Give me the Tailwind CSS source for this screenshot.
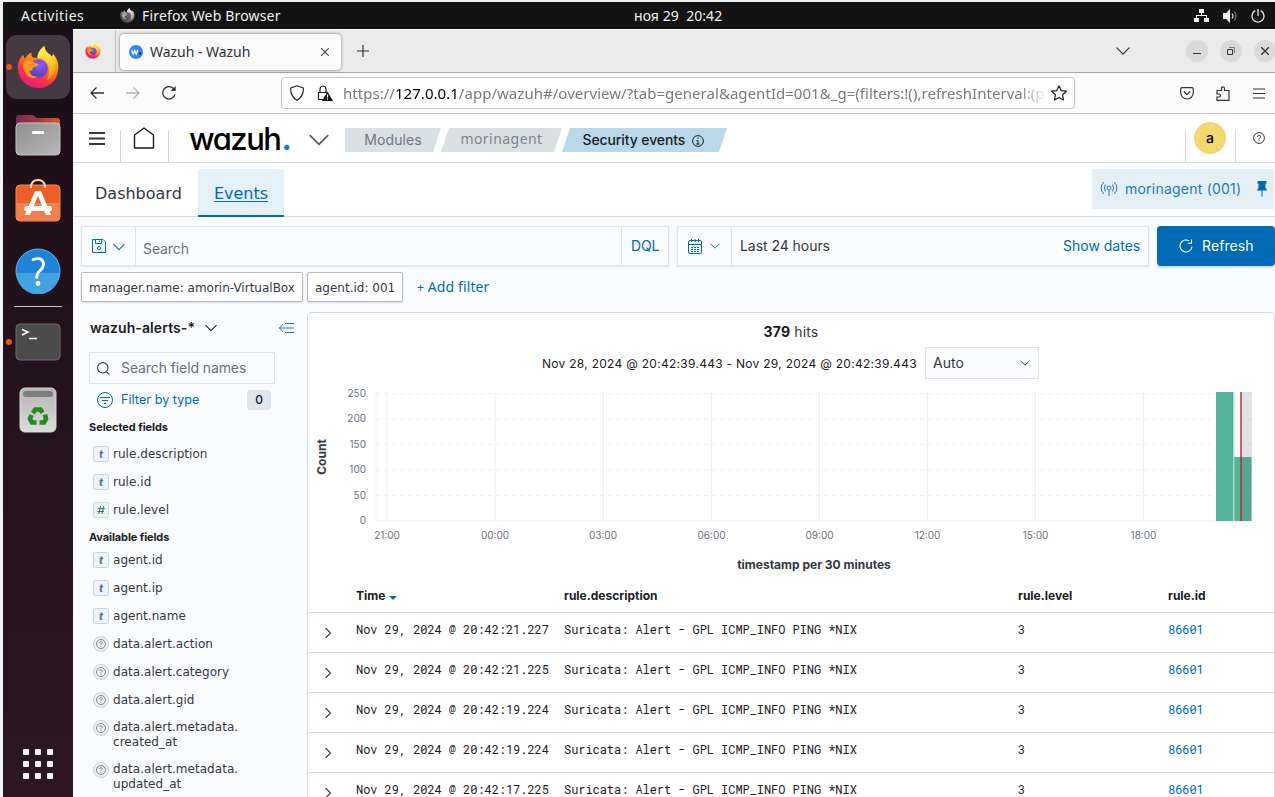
<!DOCTYPE html>
<html lang="en">
<head>
<meta charset="utf-8">
<title>Wazuh - Wazuh</title>
<script src="https://cdn.jsdelivr.net/npm/@tailwindcss/browser@4"></script>
</head>
<body class="w-[1275px] h-[797px] overflow-hidden bg-[#f1f3f5] pl-[3px] pt-[2px] font-['Inter',sans-serif] text-[#343741] whitespace-nowrap">

<svg class="absolute w-0 h-0">
  <defs>
    <linearGradient id="fxBody" x1="0.8" y1="0" x2="0.3" y2="1"><stop offset="0" stop-color="#fff44f"/><stop offset="0.35" stop-color="#ff980e"/><stop offset="0.7" stop-color="#ff3647"/><stop offset="1" stop-color="#e31587"/></linearGradient>
    <radialGradient id="fxGlobe" cx="0.6" cy="0.3" r="0.8"><stop offset="0" stop-color="#9059ff"/><stop offset="1" stop-color="#4a3fb5"/></radialGradient>
    <linearGradient id="fxTail" x1="0.3" y1="0" x2="0.7" y2="1"><stop offset="0" stop-color="#fff44f"/><stop offset="0.5" stop-color="#ffd03a"/><stop offset="1" stop-color="#ff8a16"/></linearGradient>
    <linearGradient id="fileFront" x1="0" y1="0" x2="1" y2="1"><stop offset="0" stop-color="#8f8f8f"/><stop offset="1" stop-color="#b8b8b8"/></linearGradient>
    <linearGradient id="fileBack" x1="0" y1="0" x2="1" y2="0"><stop offset="0" stop-color="#77294f"/><stop offset="0.5" stop-color="#a03a43"/><stop offset="1" stop-color="#e95420"/></linearGradient>
    <linearGradient id="bin" x1="0" y1="0" x2="0" y2="1"><stop offset="0" stop-color="#b5b5b5"/><stop offset="1" stop-color="#dcdcdc"/></linearGradient>
    <symbol id="firefox" viewBox="0 0 44 44">
      <path fill="url(#fxBody)" d="M5 10 C7 8 7 11 8 13 C9 12 12 7 15 7 C14 9 15 11 17 12 L21 12 C21 7 24 3 28 0 C28 4 31 7 34 9 C34 10 36 12 37 8 C42 14 43 20 42 25 C41 36 32 43 22 43 C11 43 2 35 1 24 C0 18 3 13 5 10Z"/>
      <path fill="url(#fxTail)" d="M21 12 C21 7 24 3 28 0 C28 4 31 7 34 9 C40 14 41 20 38 28 C36 32 33 34 30 35 C34 30 34 21 30 17 C28 14 25 12 21 12Z"/>
      <circle cx="22" cy="23" r="9.500" fill="url(#fxGlobe)"/>
      <path fill="#ff9a1f" d="M6 18 C9 14 15 14 17 16 C19 18 22 18 22 19 C22 21 17 21 16 23 C16 25 14 26 12 25 C14 30 17 32 21 31 C16 36 6 31 6 18Z"/>
      <path fill="#8a4bff" d="M18 15 C22 13 28 14 31 20 C27 16 23 17 22 19 C21 17 19 17 18 15Z"/>
    </symbol>
    <symbol id="chev" viewBox="0 0 16 16"><path d="M1 4.500 8 11.500 15 4.500" fill="none" stroke="currentColor" stroke-width="1.400" stroke-linecap="round" stroke-linejoin="round"/></symbol>
    <symbol id="expand" viewBox="0 0 16 16"><path d="M6 3.500 10.500 8 6 12.500" fill="none" stroke="currentColor" stroke-width="1.100" stroke-linecap="round"/></symbol>
    <symbol id="unk" viewBox="0 0 16 16"><circle cx="8" cy="8" r="7.500" fill="#eeeff1" stroke="#cdcfd3"/><circle cx="8" cy="8" r="4.500" fill="none" stroke="#81858f" stroke-width="1"/><path d="M6.600 7 C6.600 5.200 9.500 5.300 9.400 7 C9.300 7.900 8 7.800 8 9.100 M8 9.800 V10.700" fill="none" stroke="#81858f" stroke-width="1"/></symbol>
    <symbol id="tt" viewBox="0 0 16 16"><rect x=".5" y=".5" width="15" height="15" rx="2" fill="#edf3f8" stroke="#c4d6e6"/><text x="8" y="12" text-anchor="middle" font-family="Inter" font-size="11" font-weight="700" font-style="italic" fill="#4a7194">t</text></symbol>
    <symbol id="num" viewBox="0 0 16 16"><rect x=".5" y=".5" width="15" height="15" rx="2" fill="#eaf6f2" stroke="#bfe0d5"/><path d="M7.600 4 5.800 12 M10.800 4 9 12 M5 6.600 H11.800 M4.300 9.500 H11" stroke="#387765" stroke-width="1" fill="none"/></symbol>
  </defs>
</svg>

<!-- desktop panel -->
<div class="h-[27px] bg-[#131313] text-[#f0f0f0] flex items-center font-['Noto_Sans'] leading-[21px]">
  <span class="ml-[18px] w-[99px] text-[14px] tracking-[0.5px]">Activities</span>
  <svg class="w-[15px] h-[15px] grayscale" viewBox="0 0 44 44"><use href="#firefox"/></svg>
  <span class="ml-[7px] w-[492px] text-[14px] tracking-[0.17px]">Firefox Web Browser</span>
  <span class="w-[560px] text-[14px] tracking-[0.05px]">ноя 29&nbsp; 20:42</span>
  <svg class="w-[15px] h-[14px]" viewBox="0 0 15 14" fill="#f0f0f0"><path d="M5 0h5v4H8v2h5v3h2v4h-5V9h2V7H3v2h2v4H0V9h2V6h5V4H5z"/></svg>
  <svg class="ml-[14px] w-[15px] h-[14px]" viewBox="0 0 15 14" fill="none"><path fill="#f0f0f0" d="M0 4h3l4-4v14l-4-4H0z"/><path stroke="#d8d8d8" stroke-width="1.200" d="M9 4.500q2 2.500 0 5"/><path stroke="#777" stroke-width="1.200" d="M11.500 2.500q3 4.500 0 9"/></svg>
  <svg class="ml-[13px] w-[14px] h-[14px]" viewBox="0 0 14 14" fill="none" stroke="#e8e8e8" stroke-width="1.300"><path d="M4.300 1.700a6 6 0 1 0 5.400 0M7 0v7"/></svg>
</div>

<div class="flex h-[768px]">
  <!-- dock -->
  <aside class="w-[70px] shrink-0 bg-linear-to-b from-[#1b0e17] to-[#2c1722] flex flex-col items-center relative">
    <div class="mt-[6px] w-[64px] h-[64px] rounded-[11px] bg-[#453a41] flex items-center justify-center">
      <svg class="w-[43px] h-[43px]" viewBox="0 0 44 44"><use href="#firefox"/></svg>
    </div>
    <div class="absolute left-[3px] top-[35px] size-[6px] rounded-full bg-[#e95420]"></div>
    <div class="absolute left-[3px] top-[310px] size-[6px] rounded-full bg-[#e95420]"></div>
    <svg class="mt-[15px] w-[46px] h-[44px]" viewBox="0 0 46 44"><path fill="url(#fileBack)" d="M1 4q0-3 3-3h13q2 0 3 1.500 1 1.500 3 1.500h19q3 0 3 3v20H1z"/><rect x="1" y="9" width="44" height="32" rx="4" fill="url(#fileFront)" stroke="#c4c4c4"/><rect x="17" y="17" width="12" height="3" rx="1" fill="#fff"/></svg>
    <svg class="mt-[20px] w-[46px] h-[46px]" viewBox="0 0 46 46"><rect x="1" y="7" width="44" height="36" rx="4" fill="#ee5f28" stroke="#f58a5c"/><path fill="#f2804f" d="M1.500 25h43v14q0 4-4 4h-35q-4 0-4-4z"/><path d="M16 10V8q1-6 7-6t7 6v2" fill="none" stroke="#f6dfb0" stroke-width="2"/><path fill="#fff" d="M20 13h6l10 24h-5L23 18l-8 19h-5z"/><rect x="9" y="28" width="28" height="5" rx="2.500" fill="#fff"/></svg>
    <svg class="mt-[24px] w-[46px] h-[46px]" viewBox="0 0 46 46"><circle cx="23" cy="23" r="22" fill="#1f84d6" stroke="#68b4ea"/><path fill="#42a2e2" d="M1.500 25h43a21.500 21.500 0 0 1-43 0z"/><path d="M18 11.500q10-3 10.500 4.500 0 4-3.500 6.500-3.500 3-3.300 7" fill="none" stroke="#fff" stroke-width="2.800" stroke-linecap="round"/><circle cx="23" cy="35.500" r="2.400" fill="#fff"/></svg>
    <div class="mt-[12px] w-[48px] h-px bg-[#c9c6c8]"></div>
    <svg class="mt-[16px] w-[46px] h-[39px]" viewBox="0 0 46 39"><rect x="1" y="1" width="44" height="36" rx="4" fill="#4b4b4b" stroke="#6c6c6c"/><path d="M7 6.500 13 9 7 12M14 15.500h8" fill="none" stroke="#fff" stroke-width="1.500"/></svg>
    <svg class="mt-[25px] w-[38px] h-[46px]" viewBox="0 0 38 46"><rect x="1" y="1" width="36" height="44" rx="5" fill="url(#bin)" stroke="#d6d6d6"/><rect x="4" y="4" width="30" height="6" rx="3" fill="#7c7c7c"/><g fill="none" stroke="#26891d" stroke-width="4.600"><path d="M13.800 26 16.500 22.500H21.500L23.500 25.800"/><path d="M26 27.500 27 32 25 35.500H20.500"/><path d="M17.500 35.500H13L11 32 12.500 28"/></g></svg>
    <div class="mt-auto mb-[18px] grid grid-cols-3 gap-[6px]">
      <i class="size-[6px] rounded-[1px] bg-[#f2f0f1]"></i><i class="size-[6px] rounded-[1px] bg-[#f2f0f1]"></i><i class="size-[6px] rounded-[1px] bg-[#f2f0f1]"></i>
      <i class="size-[6px] rounded-[1px] bg-[#f2f0f1]"></i><i class="size-[6px] rounded-[1px] bg-[#f2f0f1]"></i><i class="size-[6px] rounded-[1px] bg-[#f2f0f1]"></i>
      <i class="size-[6px] rounded-[1px] bg-[#f2f0f1]"></i><i class="size-[6px] rounded-[1px] bg-[#f2f0f1]"></i><i class="size-[6px] rounded-[1px] bg-[#f2f0f1]"></i>
    </div>
  </aside>

  <main class="w-[1202px] shrink-0 bg-[#fafbfd] flex flex-col">
    <!-- browser tabs -->
    <div class="h-[44px] shrink-0 bg-[#ebebeb] border-b border-[#a8a8a8] border-t border-t-white flex items-center text-[#333] font-['Noto_Sans'] [&>*]:shrink-0">
      <div class="w-[43px] h-full border-r border-[#bdbdbd] flex items-center"><svg class="ml-[12px] size-[16px]" viewBox="0 0 44 44"><use href="#firefox"/></svg></div>
      <div class="ml-[4px] w-[221px] h-[36px] mt-[1px] rounded-[4px] bg-[#fbfbfb] shadow-[0_0_3px_rgba(0,0,0,.55)] flex items-center">
        <svg class="ml-[9px] size-[14px]" viewBox="0 0 14 14"><circle cx="7" cy="7" r="7" fill="#3585f9"/><path d="M2.500 5 4.200 9 5.700 5.500 7.200 9 8.800 5" fill="none" stroke="#fff" stroke-width="1.400"/><circle cx="11" cy="8.500" r="1" fill="#111"/></svg>
        <span class="ml-[7px] w-[171px] text-[14px] tracking-[-0.03px]">Wazuh - Wazuh</span>
        <svg class="size-[8px]" viewBox="0 0 8 8"><path d="M0 0 8 8M8 0 0 8" stroke="#444" stroke-width="1.100"/></svg>
      </div>
      <svg class="ml-[16px] size-[12px]" viewBox="0 0 12 12"><path d="M6 0V12M0 6H12" stroke="#333" stroke-width="1.200"/></svg>
      <svg class="ml-[747px] size-[14px] text-[#333]"><use href="#chev"/></svg>
      <div class="ml-[56px] size-[22px] rounded-full bg-[#dadada] flex items-center justify-center"><i class="mt-[5px] w-[8px] h-px bg-[#333]"></i></div>
      <div class="ml-[12px] size-[22px] rounded-full bg-[#dadada] flex items-center justify-center"><svg class="size-[8px]" viewBox="0 0 8 8" fill="none" stroke="#333"><path d="M.5 2.500h5v5h-5z"/><path d="M2 .5h5.500V6" stroke="#777"/></svg></div>
      <div class="ml-[12px] size-[22px] rounded-full bg-[#dadada] flex items-center justify-center"><svg class="size-[8px]" viewBox="0 0 8 8"><path d="M0 0 8 8M8 0 0 8" stroke="#333" stroke-width="1.300"/></svg></div>
    </div>
    <!-- address bar -->
    <div class="h-[41px] shrink-0 bg-[#fbfbfb] border-b border-[#c6c6c6] flex items-center">
      <svg class="ml-[17px] w-[14px] h-[12px]" viewBox="0 0 14 12" fill="none" stroke="#333" stroke-width="1.300"><path d="M14 6H1M6.500.5 1 6l5.500 5.500"/></svg>
      <svg class="ml-[22px] w-[14px] h-[12px]" viewBox="0 0 14 12" fill="none" stroke="#b3b3b3" stroke-width="1.300"><path d="M0 6H13M7.500.5 13 6 7.500 11.500"/></svg>
      <svg class="ml-[22px] size-[14px]" viewBox="0 0 14 14" fill="none" stroke="#333" stroke-width="1.300"><path d="M13 8.500A6.200 6.200 0 1 1 11.500 2.500L13 4"/><path d="M13.600 0v5H8.600z" fill="#333" stroke="none"/></svg>
      <div class="ml-[105px] w-[794px] h-[32px] rounded-[4px] border border-[#c2c2c2] bg-white flex items-center">
        <svg class="ml-[8px] w-[14px] h-[16px]" viewBox="0 0 14 16" fill="none" stroke="#222" stroke-width="1.200"><path d="M7 .8 13.300 3q.6 8-6.300 12.300Q.1 11 .7 3z" stroke-linejoin="round"/></svg>
        <svg class="ml-[13px] w-[16px] h-[16px]" viewBox="0 0 16 16" fill="none" stroke="#222" stroke-width="1.200"><path d="M6 14.500H1.500V7.500H10.500M3 7V4q.3-3 3-3t3 3v3"/><path fill="#111" stroke="none" d="M10.500 6.500 16 16H5z"/><path stroke="#fff" d="M10.500 9.500v3M10.500 13.500v1.200"/></svg>
        <div class="ml-[10px] w-[704px] overflow-hidden font-['Noto_Sans'] text-[15px] text-[#7a7a7a] mask-r-from-[96%] tracking-[0.035px]">https://<span class="text-black">127.0.0.1</span>/app/wazuh#/overview/?tab=general&amp;agentId=001&amp;_g=(filters:!(),refreshInterval:(p</div>
        <svg class="ml-[4px] size-[16px]" viewBox="0 0 16 16" fill="none" stroke="#222" stroke-width="1.200" stroke-linejoin="round"><path d="M8 .8 10.200 5.600 15.400 6.200 11.500 9.800 12.600 15 8 12.400 3.400 15 4.500 9.800.6 6.200 5.800 5.600z"/></svg>
      </div>
      <svg class="ml-[105px] w-[14px] h-[13px]" viewBox="0 0 14 13" fill="none" stroke="#333" stroke-width="1.200"><path d="M2 .7H12q1.300 0 1.300 1.300V5.500a6.300 6.500 0 0 1-12.600 0V2Q.7.700 2 .7z"/><path d="M3.800 4.500 7 7.500 10.200 4.500"/></svg>
      <svg class="ml-[22px] w-[14px] h-[15px]" viewBox="0 0 14 15" fill="none" stroke="#333" stroke-width="1.200"><path d="M1 8V4.500H5.500V2.500q0-1.700 1.500-1.700t1.500 1.700V4.500H13V14.300H1V11H3q1.500 0 1.500-1.500T3 8z"/></svg>
      <svg class="ml-[23px] w-[12px] h-[11px]" viewBox="0 0 12 11"><path d="M0 1H12M0 5.500H12M0 10H12" stroke="#333" stroke-width="1.200"/></svg>
    </div>
    <!-- wazuh header -->
    <header class="h-[49px] shrink-0 bg-white border-b border-[#d3dae6] flex items-start">
      <div class="mt-[16px] w-[48px] h-[32px] border-r border-[#d3dae6]"><svg class="ml-[16px] mt-[2px] w-[16px] h-[13px]" viewBox="0 0 16 13"><path d="M0 1H16M0 6.500H16M0 12H16" stroke="#343741" stroke-width="2"/></svg></div>
      <div class="mt-[16px] w-[48px] h-[32px] border-r border-[#d3dae6]"><svg class="ml-[12px] -mt-[3px] w-[22px] h-[22px]" viewBox="0 0 22 22" fill="none" stroke="#1a1c21" stroke-width="1.400"><path d="M1.500 8 11 1 20.500 8V21H1.500z" stroke-linejoin="round"/></svg></div>
      <div class="ml-[20px] w-[120px] h-[48px] text-[31px] leading-[49px] font-medium text-black [font-feature-settings:'cv11'] tracking-[-1.5px]">wazuh<span class="ml-px font-bold text-[#0a7dff]">.</span></div>
      <svg class="mt-[16px] size-[20px] text-[#555a66]" viewBox="0 0 16 16"><use href="#chev"/></svg>
      <div class="ml-[16px] mt-[14px] flex text-[14px] leading-[24px]">
        <div class="w-[96px] h-[24px] bg-[#d9e1e2] text-[#6e7784] text-center tracking-[0.1px] [clip-path:polygon(0_0,100%_0,calc(100%_-_8px)_100%,0_100%)]">Modules</div>
        <div class="w-[121px] h-[24px] bg-[#d9e1e2] text-[#7d8590] text-center leading-[22px] text-[14px] font-['Noto_Sans'] tracking-[0.45px] [clip-path:polygon(8px_0,100%_0,calc(100%_-_8px)_100%,0_100%)]">morinagent</div>
        <div class="w-[165px] h-[24px] bg-[#b9d9eb] text-[#1a1c21] pl-[20.500px] flex items-center [clip-path:polygon(8px_0,100%_0,calc(100%_-_8px)_100%,0_100%)]"><span class="font-medium tracking-[-0.1px]">Security events</span><svg class="ml-[7px] mt-[2px] size-[12px]" viewBox="0 0 12 12" fill="none" stroke="#1a1c21"><circle cx="6" cy="6" r="5.400"/><path d="M6 2.500v1.300M4.500 5.500H6V9M4.200 9h3.600"/></svg></div>
      </div>
      <div class="ml-[458px] mt-[16px] w-[51px] h-[32px] border-x border-[#d3dae6]"><div class="ml-[8px] -mt-[8px] size-[32px] rounded-full bg-[#f1d86f] text-black text-[14px] font-medium leading-[32px] text-center">a</div></div>
      <svg class="ml-[17px] mt-[18px] size-[12px]" viewBox="0 0 12 12" fill="none" stroke="#343741"><circle cx="6" cy="6" r="5.400"/><path d="M4.300 4.800C4.300 2.600 7.700 2.700 7.600 4.800 7.500 5.900 6 5.700 6 7.300M6 8.200V9.300"/></svg>
    </header>
    <!-- section tabs -->
    <nav class="h-[54px] shrink-0 bg-white border-b border-[#d3dae6] flex items-start pt-[6px]">
      <div class="ml-[22px] mt-[12px] w-[103px] text-[16px] leading-[26px] font-['DejaVu_Sans']">Dashboard</div>
      <div class="w-[86px] h-[48px] bg-[#e6f0f8] border-b-2 border-[#006bb4] text-center font-['DejaVu_Sans'] text-[16px] leading-[50px] text-[#006bb4] underline underline-offset-2">Events</div>
      <div class="ml-[808px] w-[182px] h-[40px] bg-[#e5eff6] flex items-center text-[#1a7abf]">
        <svg class="ml-[8px] w-[18px] h-[16px]" viewBox="0 0 18 16" fill="none" stroke="currentColor"><circle cx="9" cy="7" r="2"/><path d="M9 9v6M5.500 3.500q-2.400 3.500 0 7M12.500 3.500q2.400 3.500 0 7M3.800 1q-5.500 6 0 12M14.200 1q5.500 6 0 12"/></svg>
        <span class="ml-[7px] mb-[2px] w-[131px] text-[14px] tracking-[0.22px]">morinagent (001)</span>
        <svg class="w-[12px] h-[16px]" viewBox="0 0 12 16" fill="#006bb4"><path d="M1.500 0h9v2.500H9.500V7q1.500 1 1.500 2.500H1Q1 8 2.500 7V2.500h-1zM5.500 9h1v6.500h-1z"/></svg>
      </div>
    </nav>
    <!-- query bar -->
    <div class="mt-[9px] ml-[8px] flex h-[40px] shrink-0 text-[14px]">
      <div class="w-[588px] border border-[#dfe3ed] bg-[#fbfcfd] shadow-[0_1px_2px_rgba(152,162,179,.3)] flex items-center text-[#006bb4]">
        <div class="w-[54px] h-full border-r border-[#dfe3ed] flex items-center">
          <svg class="ml-[10px] size-[14px]" viewBox="0 0 14 14" fill="none" stroke="currentColor"><path d="M.5.5H11L13.500 3V13.500H.5zM3.500.5V4.500H9.500V.5M7.500 1.500v1.500"/><circle cx="7" cy="9" r="1.500"/></svg>
          <svg class="ml-[7px] mt-px size-[12px]"><use href="#chev"/></svg>
        </div>
        <span class="ml-[7px] mt-[4px] w-[478px] text-[#6a717d] tracking-[-0.1px]">Search</span>
        <div class="h-full border-l border-[#dfe3ed] pl-[9px] leading-[38px] tracking-[-0.1px]">DQL</div>
      </div>
      <div class="ml-[8px] w-[472px] border border-[#dfe3ed] bg-[#fbfcfd] shadow-[0_1px_2px_rgba(152,162,179,.3)] flex items-center text-[#006bb4]">
        <div class="w-[54px] h-full border-r border-[#dfe3ed] flex items-center">
          <svg class="ml-[10px] w-[14px] h-[15px]" viewBox="0 0 14 15" fill="none" stroke="currentColor"><rect x=".5" y="1.500" width="13" height="13" rx="1.500"/><path d="M1 5.500H13M3.500 0V3M7 0V3M10.500 0V3"/><path stroke-dasharray="2 1" d="M3 8.500H11.500M3 10.500H11.500M3 12.500H11.500"/></svg>
          <svg class="ml-[8px] size-[10px]"><use href="#chev"/></svg>
        </div>
        <span class="ml-[8px] mb-[2px] w-[323px] text-[#343741] tracking-[-0.05px]">Last 24 hours</span>
        <span class="mb-[2px]">Show dates</span>
      </div>
      <div class="ml-[8px] w-[118px] rounded-[4px] bg-[#006bb4] shadow-[0_2px_2px_rgba(0,107,180,.2)] text-white flex items-center">
        <svg class="ml-[22px] size-[14px]" viewBox="0 0 14 14" fill="none" stroke="currentColor" stroke-width="1.100"><path d="M13 7.500A6 6 0 1 1 10 1.800M9 4.200H12.500V.5"/></svg>
        <span class="ml-[9px] mb-[2px] tracking-[0.1px]">Refresh</span>
      </div>
    </div>
    <!-- filters -->
    <div class="mt-[6px] ml-[8px] h-[30px] shrink-0 flex items-center font-['DejaVu_Sans'] text-[12px]">
      <div class="w-[222px] h-[30px] leading-[30px] pl-[7px] rounded-[2px] border border-[#b6bbc6] bg-white shadow-[0_1px_2px_rgba(152,162,179,.35)]">manager.name: amorin-VirtualBox</div>
      <div class="ml-[4px] w-[96px] h-[30px] leading-[30px] pl-[7px] rounded-[2px] border border-[#b6bbc6] bg-white shadow-[0_1px_2px_rgba(152,162,179,.35)]">agent.id: 001</div>
      <span class="ml-[14px] mb-[2px] text-[#006bb4] text-[14px] font-['Noto_Sans'] tracking-[0.12px]"><span class="text-[12px]">+</span> Add filter</span>
    </div>

    <div class="flex flex-1 min-h-0">
      <!-- field list -->
      <section class="w-[234px] shrink-0 pl-[16px] flex flex-col [&>*]:shrink-0">
        <div class="mt-[16px] h-[20px] flex items-center text-[14px] font-semibold text-[#1a1c21]">
          <span class="ml-px mb-[2px] w-[115px] tracking-[0.1px]">wazuh-alerts-*</span>
          <svg class="size-[12px]"><use href="#chev"/></svg>
          <svg class="ml-[62px] w-[15px] h-[10px]" viewBox="0 0 15 10" fill="none" stroke="#1a7abf"><path d="M6 .5H15M0 5H15M6 9.500H15M4 1 .7 5 4 9"/></svg>
        </div>
        <div class="mt-[14px] w-[186px] h-[32px] border border-[#dfe3ed] bg-[#fbfcfd] flex items-center text-[14px] text-[#6a717d]">
          <svg class="ml-[7px] size-[13px]" viewBox="0 0 13 13" fill="none" stroke="#343741" stroke-width="1.100"><circle cx="5.800" cy="5.800" r="5.200"/><path d="M9.500 9.800 12.500 12.500"/></svg>
          <span class="ml-[11px] mb-px tracking-[-0.1px]">Search field names</span>
        </div>
        <div class="mt-[6px] h-[20px] flex items-center text-[#006bb4] text-[12.500px]">
          <svg class="ml-[8px] size-[16px]" viewBox="0 0 16 16" fill="none" stroke="currentColor"><circle cx="8" cy="8" r="7.500"/><path d="M3 5.500H13M5 8.500H11M7 11.500H9"/></svg>
          <span class="ml-[8px] w-[126px] tracking-[0.08px]">Filter by type</span>
          <span class="w-[24px] h-[20px] rounded-[3px] bg-[#e0e5ee] text-center leading-[20px] text-[12px] font-medium text-[#1a1c21]">0</span>
        </div>
        <h3 class="mt-[9px] h-[16px] leading-[16px] text-[11px] font-bold text-[#1a1c21] tracking-[-0.06px]">Selected fields</h3>
        <ul class="mt-[5px] ml-[4px] font-['DejaVu_Sans'] text-[12px] leading-[15px] tracking-[0.04px]">
          <li class="h-[28px] flex items-center gap-[4px]"><svg class="size-[16px]"><use href="#tt"/></svg>rule.description</li>
          <li class="h-[28px] flex items-center gap-[4px]"><svg class="size-[16px]"><use href="#tt"/></svg>rule.id</li>
          <li class="h-[28px] flex items-center gap-[4px]"><svg class="size-[16px]"><use href="#num"/></svg>rule.level</li>
        </ul>
        <h3 class="mt-[5px] h-[16px] leading-[16px] text-[11px] font-bold text-[#1a1c21] tracking-[-0.1px]">Available fields</h3>
        <ul class="mt-px ml-[4px] font-['DejaVu_Sans'] text-[12px] leading-[15px] tracking-[0.04px]">
          <li class="h-[28px] flex items-center gap-[4px]"><svg class="size-[16px]"><use href="#tt"/></svg>agent.id</li>
          <li class="h-[28px] flex items-center gap-[4px]"><svg class="size-[16px]"><use href="#tt"/></svg>agent.ip</li>
          <li class="h-[28px] flex items-center gap-[4px]"><svg class="size-[16px]"><use href="#tt"/></svg>agent.name</li>
          <li class="h-[28px] flex items-center gap-[4px]"><svg class="size-[16px]"><use href="#unk"/></svg>data.alert.action</li>
          <li class="h-[28px] flex items-center gap-[4px]"><svg class="size-[16px]"><use href="#unk"/></svg>data.alert.category</li>
          <li class="h-[28px] flex items-center gap-[4px]"><svg class="size-[16px]"><use href="#unk"/></svg>data.alert.gid</li>
          <li class="h-[42px] pt-[6px] flex gap-[4px]"><svg class="size-[16px]"><use href="#unk"/></svg><span>data.alert.metadata.<br>created_at</span></li>
          <li class="h-[42px] pt-[6px] flex gap-[4px]"><svg class="size-[16px]"><use href="#unk"/></svg><span>data.alert.metadata.<br>updated_at</span></li>
        </ul>
      </section>

      <!-- results -->
      <section class="mt-[10px] w-[968px] shrink-0 h-[500px] rounded-t-[4px] border border-[#d3dae6] bg-white">
        <div class="h-[37px] leading-[38px] text-center text-[14px] tracking-[0.15px]"><span class="font-bold text-[#1a1c21]">379</span> hits</div>
        <div class="-mt-[3px] h-[32px] flex items-center">
          <span class="ml-[234px] w-[375px] mt-px text-[12px] tracking-[0.28px] text-[#1a1c21]">Nov 28, 2024 @ 20:42:39.443 - Nov 29, 2024 @ 20:42:39.443</span>
          <div class="ml-[8px] w-[114px] h-[32px] border border-[#dfe3ed] bg-[#fbfcfd] flex items-center text-[14px]"><span class="ml-[7px] mb-[2px] w-[87px]">Auto</span><svg class="size-[10px]"><use href="#chev"/></svg></div>
        </div>
        <svg class="w-[966px] h-[201px] block" viewBox="308 379 966 201" font-family="Inter" font-size="10" fill="#69707d">
          <g stroke="#eef0f3" fill="none">
            <path d="M376 392V521M387 392V521M495 392V521M603.500 392V521M711.500 392V521M819.500 392V521M927.500 392V521M1035.500 392V521M1143.500 392V521"/>
            <path stroke-dasharray="4 4" d="M376 393.500H1252M376 419H1252M376 444.500H1252M376 470H1252M376 495.500H1252"/>
            <path d="M376 521H1252"/>
          </g>
          <path fill="#54b399" d="M1216 392h18v129h-18zM1234 457h17.500v64h-17.500z"/>
          <path fill="#a9dccd" d="M1233 392h1.500v129h-1.500z"/>
          <path fill="#69707d" fill-opacity=".2" d="M1241 392h11v129h-11z"/>
          <path fill="#bd271e" fill-opacity=".7" d="M1240 392h2v129h-2z"/>
          <g text-anchor="end"><text x="366" y="397">250</text><text x="366" y="422">200</text><text x="366" y="448">150</text><text x="366" y="473">100</text><text x="366" y="499">50</text><text x="366" y="524">0</text></g>
          <g text-anchor="middle"><text x="387" y="539">21:00</text><text x="495" y="539">00:00</text><text x="603" y="539">03:00</text><text x="711.500" y="539">06:00</text><text x="819.500" y="539">09:00</text><text x="927.500" y="539">12:00</text><text x="1035.500" y="539">15:00</text><text x="1143.500" y="539">18:00</text>
            <g font-size="12" font-weight="700" fill="#343741"><text x="814" y="569">timestamp per 30 minutes</text><text transform="translate(326 457) rotate(-90)">Count</text></g></g>
        </svg>
        <div class="h-[33px] border-b border-[#d3dae6] flex items-center text-[12px] font-bold text-[#1a1c21]">
          <div class="w-[48px]"></div>
          <div class="w-[208px] flex items-center">Time<svg class="ml-[4px] mt-[4px] w-[8px] h-[4px]" viewBox="0 0 8 4"><path d="M0 0H8L4 4z" fill="#006bb4"/></svg></div>
          <div class="w-[454px]">rule.description</div><div class="w-[150px]">rule.level</div><div>rule.id</div>
        </div>
        <div class="font-['Roboto_Mono','DejaVu_Sans_Mono',monospace] text-[12px] text-[#1a1c21] tracking-[-0.06px]">
          <div class="h-[40px] border-b border-[#d3dae6] flex items-center"><div class="w-[48px] pl-[12px]"><svg class="mt-px size-[16px] text-[#343741]"><use href="#expand"/></svg></div><div class="w-[208px] mb-[8px]">Nov 29, 2024 @ 20:42:21.227</div><div class="w-[454px] mb-[8px]">Suricata: Alert - GPL ICMP_INFO PING *NIX</div><div class="w-[150px] mb-[8px]">3</div><div class="mb-[8px] text-[#006bb4]">86601</div></div>
          <div class="h-[40px] border-b border-[#d3dae6] flex items-center"><div class="w-[48px] pl-[12px]"><svg class="mt-px size-[16px] text-[#343741]"><use href="#expand"/></svg></div><div class="w-[208px] mb-[8px]">Nov 29, 2024 @ 20:42:21.225</div><div class="w-[454px] mb-[8px]">Suricata: Alert - GPL ICMP_INFO PING *NIX</div><div class="w-[150px] mb-[8px]">3</div><div class="mb-[8px] text-[#006bb4]">86601</div></div>
          <div class="h-[40px] border-b border-[#d3dae6] flex items-center"><div class="w-[48px] pl-[12px]"><svg class="mt-px size-[16px] text-[#343741]"><use href="#expand"/></svg></div><div class="w-[208px] mb-[8px]">Nov 29, 2024 @ 20:42:19.224</div><div class="w-[454px] mb-[8px]">Suricata: Alert - GPL ICMP_INFO PING *NIX</div><div class="w-[150px] mb-[8px]">3</div><div class="mb-[8px] text-[#006bb4]">86601</div></div>
          <div class="h-[40px] border-b border-[#d3dae6] flex items-center"><div class="w-[48px] pl-[12px]"><svg class="mt-px size-[16px] text-[#343741]"><use href="#expand"/></svg></div><div class="w-[208px] mb-[8px]">Nov 29, 2024 @ 20:42:19.224</div><div class="w-[454px] mb-[8px]">Suricata: Alert - GPL ICMP_INFO PING *NIX</div><div class="w-[150px] mb-[8px]">3</div><div class="mb-[8px] text-[#006bb4]">86601</div></div>
          <div class="h-[40px] border-b border-[#d3dae6] flex items-center"><div class="w-[48px] pl-[12px]"><svg class="mt-px size-[16px] text-[#343741]"><use href="#expand"/></svg></div><div class="w-[208px] mb-[8px]">Nov 29, 2024 @ 20:42:17.225</div><div class="w-[454px] mb-[8px]">Suricata: Alert - GPL ICMP_INFO PING *NIX</div><div class="w-[150px] mb-[8px]">3</div><div class="mb-[8px] text-[#006bb4]">86601</div></div>
        </div>
      </section>
    </div>
  </main>
</div>
</body>
</html>
